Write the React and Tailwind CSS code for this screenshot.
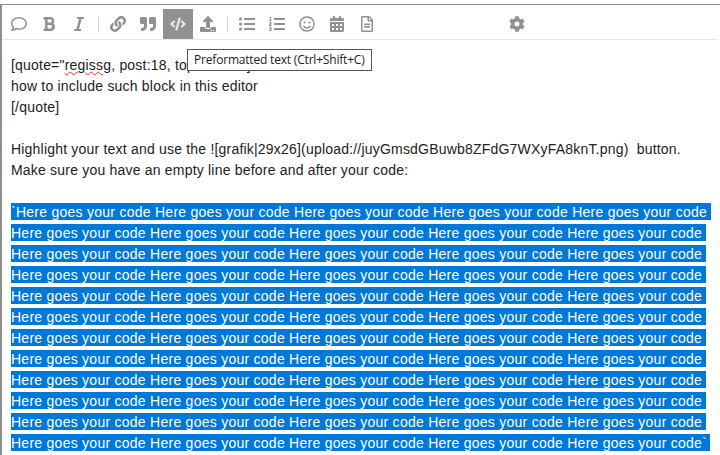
import { FaRegComment, FaBold, FaItalic, FaLink, FaQuoteRight, FaCode, FaUpload, FaListUl, FaListOl, FaRegSmile, FaCalendarAlt, FaRegFileAlt, FaCog } from 'react-icons/fa';

const CODE = 'Here goes your code';
const row = Array(5).fill(CODE).join(' ');

const ToolButton = ({ icon: Icon, active, size = 'text-[16px]' }) => (
  <button className={`flex items-center justify-center w-[30px] h-[30px] ${size} ${active ? 'bg-[#919191] text-[#e9e9e9]' : 'text-[#919191]'}`}>
    <Icon />
  </button>
);

const Divider = () => <div className="w-px h-[15px] mx-1 my-auto bg-[#d4d4d4]" />;

const App = () => {
  return (
    <div className="relative h-[455px] overflow-hidden bg-white pt-1 font-['Liberation_Sans',Arial,sans-serif]">
      <div className="h-full border-t border-l-2 border-[#8e8e8e]">
        <div className="flex h-[35px] pl-0.5 pt-1 border-b border-[#e9e9e9] mr-[2px]">
          <ToolButton icon={FaRegComment} />
          <ToolButton icon={FaBold} />
          <ToolButton icon={FaItalic} />
          <Divider />
          <ToolButton icon={FaLink} />
          <ToolButton icon={FaQuoteRight} />
          <ToolButton icon={FaCode} active />
          <ToolButton icon={FaUpload} />
          <Divider />
          <ToolButton icon={FaListUl} />
          <ToolButton icon={FaListOl} />
          <ToolButton icon={FaRegSmile} />
          <ToolButton icon={FaCalendarAlt} />
          <ToolButton icon={FaRegFileAlt} />
          <div className="ml-[120px]">
            <ToolButton icon={FaCog} />
          </div>
        </div>

        <div className="pl-[9px] pt-[15px] text-[14px] tracking-[0.2px] leading-[21px] text-[#222222] whitespace-pre">
          <div>
            [quote="<span className="underline decoration-wavy decoration-red-500 decoration-1 underline-offset-1">regissg</span>, post:18, topic:1234"]
          </div>
          <div>how to include such block in this editor</div>
          <div>[/quote]</div>
          <div className="h-[21px]" />
          <div>Highlight your text and use the ![grafik|29x26](upload://juyGmsdGBuwb8ZFdG7WXyFA8knT.png)  button.</div>
          <div>Make sure you have an empty line before and after your code:</div>
          <div className="h-[21px]" />
          <div className="tracking-[0.26px]">
            <span className="bg-[#0078d7] text-white pt-px">{`\`${row} `}</span>
          </div>
          {Array.from({ length: 10 }).map((_, i) => (
            <div key={i} className="tracking-[0.26px]">
              <span className="bg-[#0078d7] text-white pt-px">{`${row} `}</span>
            </div>
          ))}
          <div className="tracking-[0.26px]">
            <span className="bg-[#0078d7] text-white pt-px pr-[3px]">{`${row}\``}</span>
          </div>
        </div>
      </div>

      <div className="absolute left-[187px] top-[49px] h-[22px] px-[6px] flex items-center border border-[#555555] bg-white text-[12px] tracking-[-0.19px] text-[#222222] font-['Open_Sans',sans-serif] whitespace-nowrap">
        Preformatted text (Ctrl+Shift+C)
      </div>
    </div>
  );
};

export default App;
